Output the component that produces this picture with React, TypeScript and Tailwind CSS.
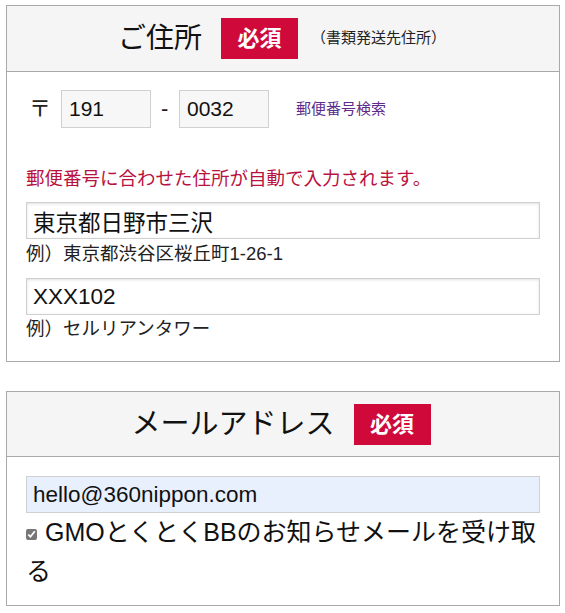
import React from "react";

const jp = '"Liberation Sans", "Noto Sans CJK JP", sans-serif';

function Badge() {
  return (
    <span className="inline-flex h-[41px] w-[77px] items-center justify-center bg-[#cf0a3a] text-[22px] font-bold text-white">
      必須
    </span>
  );
}

const inputCls =
  "block h-[37px] w-[514px] border border-[#d0d0d0] px-[6px] text-[22.5px] text-[#111] shadow-[inset_0_1px_3px_rgba(0,0,0,0.12)] outline-none";

export default function App() {
  return (
    <div className="min-h-[613px] bg-white pl-[6px] pt-[5px] text-[#222]" style={{ fontFamily: jp }}>
      {/* Address panel */}
      <div className="w-[554px] border border-[#a9a9a9]">
        <div className="flex h-[66px] items-center justify-center border-b border-[#a9a9a9] bg-[#f5f5f5] pr-[2px]">
          <span className="text-[28px] leading-none text-[#111]">ご住所</span>
          <span className="ml-[19px]">
            <Badge />
          </span>
          <span className="ml-[13px] text-[15px] text-[#222]">（書類発送先住所）</span>
        </div>
        <div className="h-[289px] pl-[19px] pt-[18px]">
          <div className="flex items-center">
            <span className="ml-[3px] text-[22px] leading-none">〒</span>
            <input
              readOnly
              value="191"
              className="ml-[10px] h-[38px] w-[90px] border border-[#d0d0d0] bg-[#f7f7f7] px-[7px] text-[21px] text-[#111] outline-none"
            />
            <span className="ml-[10px] w-[18px] text-[22px] leading-none">-</span>
            <input
              readOnly
              value="0032"
              className="h-[38px] w-[90px] border border-[#d0d0d0] bg-[#f7f7f7] px-[7px] text-[21px] text-[#111] outline-none"
            />
            <span className="ml-[27px] text-[15px] text-[#5b2c8c]">郵便番号検索</span>
          </div>
          <div className="mt-[39px] text-[18.5px] leading-[24px] text-[#b8123f]">
            郵便番号に合わせた住所が自動で入力されます。
          </div>
          <input readOnly value="東京都日野市三沢" className={`${inputCls} mt-[11px] bg-white`} />
          <div className="mt-[3px] text-[18.5px] leading-[24px]">例）東京都渋谷区桜丘町1-26-1</div>
          <input readOnly value="XXX102" className={`${inputCls} mt-[12px] bg-white`} />
          <div className="mt-[2px] text-[18.5px] leading-[24px]">例）セルリアンタワー</div>
        </div>
      </div>

      {/* Email panel */}
      <div className="mt-[29px] w-[554px] border border-[#a9a9a9]">
        <div className="flex h-[65px] items-center justify-center border-b border-[#a9a9a9] bg-[#f5f5f5] pr-[4px]">
          <span className="text-[29px] leading-none text-[#111]">メールアドレス</span>
          <span className="ml-[19px]">
            <Badge />
          </span>
        </div>
        <div className="h-[148px] pl-[19px] pt-[19px]">
          <input
            readOnly
            value="hello@360nippon.com"
            className="block h-[37px] w-[514px] border border-[#d0d0d0] bg-[#e8f0fe] px-[6px] text-[22.5px] text-[#111] outline-none"
          />
          <div className="w-[514px] text-[25px] leading-[39px] text-[#111]">
            <input
              type="checkbox"
              readOnly
              checked
              className="mr-[8px] inline-block h-[11px] w-[11px] align-middle accent-[#777]"
            />
            GMOとくとくBBのお知らせメールを受け取る
          </div>
        </div>
      </div>
    </div>
  );
}
